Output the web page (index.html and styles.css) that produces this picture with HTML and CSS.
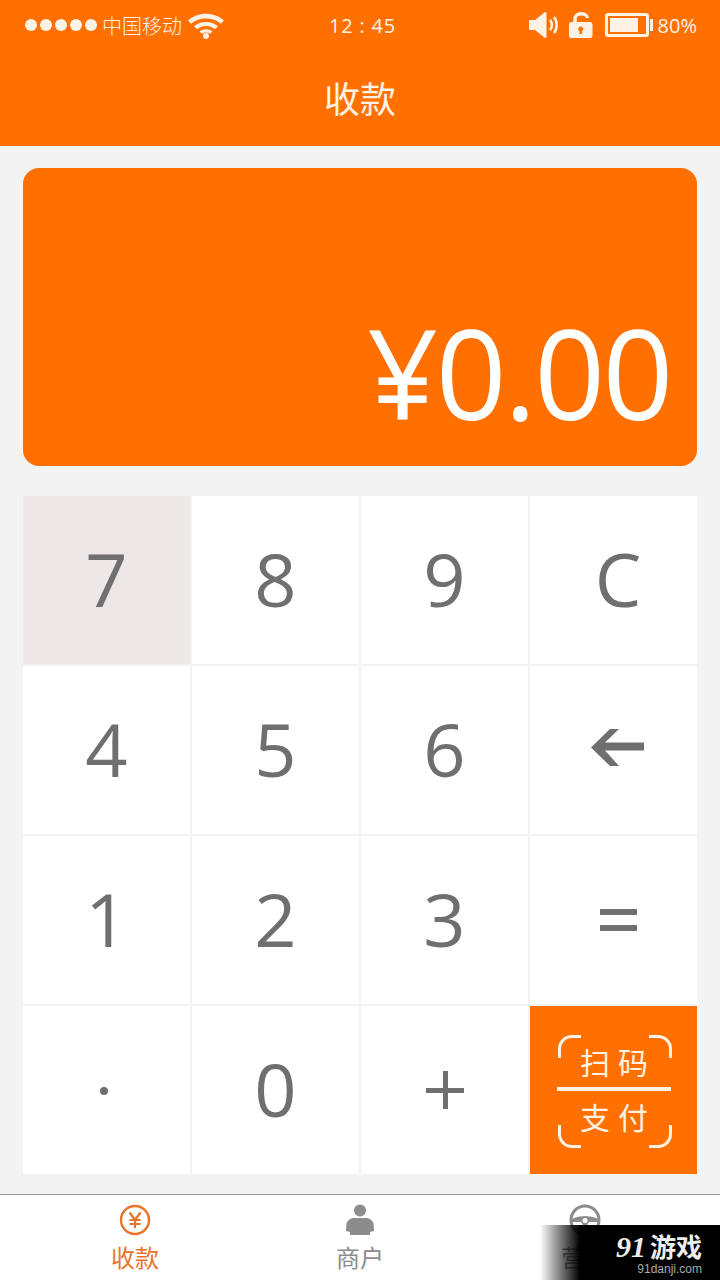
FILE: index.html
```html
<!DOCTYPE html>
<html lang="zh-CN">

<head>
	<meta charset="UTF-8">
	<meta name="viewport" content="width=device-width, initial-scale=1.0">
	<title>收款</title>
	<link rel="stylesheet" href="styles.css">
</head>

<body>

	<header class="app-header">
		<div class="status-bar">
			<div class="status-left">
				<div class="signal"><i></i><i></i><i></i><i></i><i></i></div>
				<span class="carrier">中国移动</span>
				<svg class="wifi" width="38" height="28" viewBox="0 0 38 28">
					<path d="M1 9.500C10.500 0.500 27.500 0.500 37 9.500L33.800 12.800C26 5.800 12 5.800 4.200 12.800Z" fill="#fff3e6" />
					<path d="M7 15.300C13.500 9.500 24.500 9.500 31 15.300L28 18.300C22.800 13.800 15.200 13.800 10 18.300Z" fill="#fff3e6" />
					<path d="M12.500 20.500C16 17.600 22 17.600 25.500 20.500L23 22.800C20.500 21 17.500 21 15 22.800Z" fill="#fff3e6" />
					<circle cx="19" cy="25" r="3" fill="#fff3e6" />
				</svg>
			</div>
			<div class="status-time">12 : 45</div>
			<div class="status-right">
				<svg class="sound" width="30" height="28" viewBox="0 0 30 28">
					<path d="M1 9Q0 9 0 10V18Q0 19 1 19H6L16 27Q17.500 27 17.500 25.500V2.500Q17.500 1 16 1L6 9Z" fill="#fff3e6" />
					<path d="M21 9C23.500 11.500 23.500 16.500 21 19" fill="none" stroke="#fff3e6" stroke-width="2.600" />
					<path d="M25 6C28.500 10 28.500 18 25 22" fill="none" stroke="#fff3e6" stroke-width="2.600" />
				</svg>
				<svg class="lock" width="26" height="28" viewBox="0 0 26 28">
					<path d="M7 12V7.500C7 1.500 18.500 1 19.500 7" fill="none" stroke="#fff3e6" stroke-width="3.500" />
					<path fill-rule="evenodd" d="M3 11H22Q24.500 11 24.500 13.500V25Q24.500 27 22 27H3Q1 27 1 25V13.500Q1 11 3 11ZM12.700 15.500A2.500 2.500 0 0 0 11.500 20.200V23H14V20.200A2.500 2.500 0 0 0 12.700 15.500Z" fill="#fff3e6" />
				</svg>
				<div class="battery"><div class="battery-level"></div></div>
				<span class="battery-text">80%</span>
			</div>
		</div>
		<h1 class="app-title">收款</h1>
	</header>

	<main class="content">
		<div class="amount-card">
			<div class="amount">¥0.00</div>
		</div>

		<div class="keypad">
			<div class="key key-pressed">7</div>
			<div class="key">8</div>
			<div class="key">9</div>
			<div class="key key-side">C</div>
			<div class="key">4</div>
			<div class="key">5</div>
			<div class="key">6</div>
			<div class="key key-side">
				<svg width="56" height="38" viewBox="0 0 56 38">
					<path d="M20 0H29L15 13.500H54V21.500H15L29 37H20L1 18.500Z" fill="#6f6f6f" />
				</svg>
			</div>
			<div class="key">1</div>
			<div class="key">2</div>
			<div class="key">3</div>
			<div class="key key-side">
				<div class="equals"></div>
			</div>
			<div class="key">
				<div class="dot"></div>
			</div>
			<div class="key">0</div>
			<div class="key">
				<div class="plus"></div>
			</div>
			<div class="key key-scan">
				<span class="corner corner-tl"></span>
				<span class="corner corner-tr"></span>
				<span class="corner corner-bl"></span>
				<span class="corner corner-br"></span>
				<div class="scan-text">扫码</div>
				<div class="scan-line"></div>
				<div class="scan-text">支付</div>
			</div>
		</div>
	</main>

	<nav class="tabbar">
		<div class="tab tab-active">
			<div class="tab-icon">
				<svg width="32" height="32" viewBox="0 0 32 32">
					<circle cx="16" cy="16" r="14" fill="none" stroke="#e8742a" stroke-width="2.400" />
					<path d="M10.500 8.500L16 16L21.500 8.500M16 16V24M10.500 16H21.500M10.500 20H21.500" fill="none" stroke="#e8742a" stroke-width="2.200" />
				</svg>
			</div>
			<span class="tab-label">收款</span>
		</div>
		<div class="tab">
			<div class="tab-icon">
				<svg width="30" height="32" viewBox="0 0 30 32">
					<circle cx="15" cy="6.500" r="6" fill="#8c8c8c" />
					<path d="M8 14H22Q27 15 28.500 19.500L29 27L25 28V31H5V28L1 27L1.500 19.500Q3 15 8 14Z" fill="#8c8c8c" />
				</svg>
			</div>
			<span class="tab-label">商户</span>
		</div>
		<div class="tab">
			<div class="tab-icon">
				<svg width="32" height="32" viewBox="0 0 32 32">
					<circle cx="16" cy="16" r="14" fill="none" stroke="#8c8c8c" stroke-width="3" />
					<path d="M2 15Q16 9 30 15L30 18L20 18L18 21H14L12 18L2 18Z" fill="#8c8c8c" />
					<circle cx="16" cy="16.500" r="2.500" fill="#fff" />
				</svg>
			</div>
			<span class="tab-label">营销</span>
		</div>
	</nav>

	<div class="watermark">
		<div class="watermark-logo"><em>91</em>游戏</div>
		<div class="watermark-url">91danji.com</div>
	</div>

</body>

</html>
```

FILE: styles.css
```css
body {
	font-family: "Open Sans", "Noto Sans CJK SC", sans-serif;
	width: 720px;
	height: 1280px;
	margin: 0;
	position: relative;
	overflow: hidden;
	display: flex;
	flex-direction: column;
	background-color: #f3f3f3;
}

.app-header {
	height: 146px;
	background-color: #ff7000;
	color: #fff3e6;
}

.status-bar {
	height: 50px;
	padding: 0 23px 0 25px;
	display: grid;
	grid-template-columns: 1fr auto 1fr;
	align-items: center;
}

.status-left,
.status-right {
	display: flex;
	align-items: center;
}

.status-right {
	justify-content: flex-end;
}

.signal {
	display: flex;
	gap: 3px;
}

.signal i {
	width: 12px;
	height: 12px;
	border-radius: 50%;
	background-color: #fff3e6;
}

.carrier {
	margin-left: 5px;
	font-size: 20px;
	font-weight: 300;
}

.wifi {
	margin-left: 5px;
}

.status-time {
	font-size: 20px;
	letter-spacing: 0.8px;
	padding-left: 3px;
}

.sound {
	margin-right: 9px;
}

.lock {
	margin-right: 11px;
}

.battery {
	position: relative;
	width: 34px;
	height: 14px;
	padding: 2px;
	border: 3px solid #fff3e6;
	border-radius: 3px;
	margin-right: 9px;
}

.battery::after {
	content: "";
	position: absolute;
	right: -7px;
	top: 3px;
	width: 3px;
	height: 12px;
	background-color: #fff3e6;
}

.battery-level {
	width: 28px;
	height: 14px;
	background-color: #fff3e6;
}

.battery-text {
	font-size: 20px;
}

.app-title {
	margin: 0;
	text-align: center;
	font-size: 36px;
	font-weight: 400;
	line-height: 94px;
	font-family: "Noto Sans CJK SC", sans-serif;
}

.content {
	flex: 1;
	padding: 22px 23px 0;
}

.amount-card {
	height: 298px;
	box-sizing: border-box;
	background-color: #ff7000;
	border-radius: 16px;
	padding: 0 26px 10px 0;
	display: flex;
	justify-content: flex-end;
	align-items: flex-end;
}

.amount {
	font-size: 124px;
	font-weight: 500;
	letter-spacing: -2.500px;
	line-height: 168px;
	color: #fff;
}

.keypad {
	margin-top: 30px;
	display: grid;
	grid-template-columns: repeat(4, 1fr);
	grid-auto-rows: 168px;
	gap: 2px;
}

.key {
	position: relative;
	box-sizing: border-box;
	background-color: #fff;
	color: #6f6f6f;
	font-size: 74px;
	padding-bottom: 4px;
	display: flex;
	align-items: center;
	justify-content: center;
}

.key-side {
	padding-left: 9px;
}

.key-pressed {
	background-color: #ede7e7;
}

.equals {
	width: 37px;
	height: 22px;
	margin-top: 4px;
	box-sizing: border-box;
	border-top: 6px solid #6f6f6f;
	border-bottom: 6px solid #6f6f6f;
}

.dot {
	width: 8px;
	height: 8px;
	margin: 6px 6px 0 0;
	border-radius: 50%;
	background-color: #6f6f6f;
}

.plus {
	position: relative;
	width: 38px;
	height: 38px;
	margin-top: 4px;
}

.plus::before,
.plus::after {
	content: "";
	position: absolute;
	background-color: #6f6f6f;
}

.plus::before {
	left: 0;
	right: 0;
	top: 17px;
	height: 5px;
}

.plus::after {
	top: 0;
	bottom: 0;
	left: 17px;
	width: 5px;
}

.key-scan {
	background-color: #ff7000;
	flex-direction: column;
	padding: 0 0 4px 1px;
}

.scan-text {
	font-family: "Noto Sans CJK SC", sans-serif;
	font-size: 30px;
	font-weight: 400;
	letter-spacing: 8px;
	padding-left: 8px;
	line-height: 44px;
	margin-top: 3px;
	color: #fff3e6;
}

.scan-text:first-of-type {
	margin: 0 0 4px;
}

.scan-line {
	width: 114px;
	height: 4px;
	background-color: #fff3e6;
}

.corner {
	position: absolute;
	width: 20px;
	height: 20px;
	border: 0 solid #fff3e6;
}

.corner-tl {
	top: 29px;
	left: 28px;
	border-top-width: 3px;
	border-left-width: 3px;
	border-top-left-radius: 14px;
}

.corner-tr {
	top: 29px;
	right: 25px;
	border-top-width: 3px;
	border-right-width: 3px;
	border-top-right-radius: 14px;
}

.corner-bl {
	bottom: 26px;
	left: 28px;
	border-bottom-width: 3px;
	border-left-width: 3px;
	border-bottom-left-radius: 14px;
}

.corner-br {
	bottom: 26px;
	right: 25px;
	border-bottom-width: 3px;
	border-right-width: 3px;
	border-bottom-right-radius: 14px;
}

.tabbar {
	height: 85px;
	padding: 0 22.500px;
	background-color: #fff;
	border-top: 1px solid #999;
	display: grid;
	grid-template-columns: repeat(3, 1fr);
	flex-shrink: 0;
}

.tab {
	display: flex;
	flex-direction: column;
	align-items: center;
	padding-top: 9px;
	color: #8c8c8c;
}

.tab-icon {
	height: 32px;
}

.tab-active {
	color: #e8742a;
}

.tab-label {
	font-family: "Noto Sans CJK SC", sans-serif;
	font-size: 24px;
	font-weight: 400;
	line-height: 36px;
	margin-top: 3px;
}

/* --- Site watermark --- */
.watermark {
	position: absolute;
	right: 0;
	bottom: 0;
	width: 180px;
	height: 55px;
	box-sizing: border-box;
	padding: 6px 18px 0 0;
	text-align: right;
	background: linear-gradient(to right, rgba(0, 0, 0, 0), #000 40px);
}

.watermark-logo {
	font-family: "Noto Sans CJK SC", sans-serif;
	font-size: 26px;
	font-weight: 700;
	line-height: 30px;
	color: #eee;
}

.watermark-logo em {
	font-family: "Liberation Serif", serif;
	font-size: 30px;
	line-height: 30px;
	margin-right: 4px;
}

.watermark-url {
	font-family: "Liberation Sans", sans-serif;
	font-size: 12px;
	line-height: 14px;
	color: #aaa;
}
```
